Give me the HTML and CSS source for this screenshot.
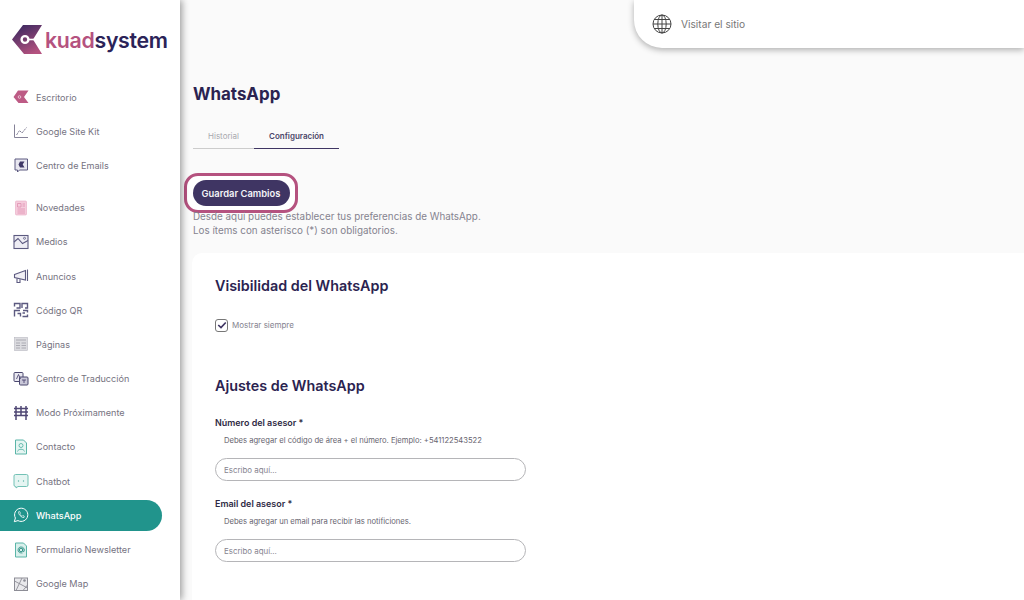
FILE: index.html
```html
<!DOCTYPE html>
<html lang="es">
<head>
<meta charset="utf-8">
<title>WhatsApp</title>
<link rel="stylesheet" href="styles.css">
</head>
<body>
<div class="app">
  <aside class="sidebar">
    <div class="logo">
      <svg class="logo-mark" viewBox="0 0 32 32" width="32" height="32">
        <defs><linearGradient id="lg" x1="0.200" y1="0" x2="0.700" y2="1"><stop offset="0" stop-color="#3a2860"/><stop offset="1" stop-color="#b5527f"/></linearGradient></defs>
        <path d="M11 1H30L21 15.500L30 30H12L0 15.500Z" fill="url(#lg)"/>
        <circle cx="13" cy="15.500" r="3.400" fill="none" stroke="#fff" stroke-width="2.400"/>
        <path d="M16 15.500H23" stroke="#fff" stroke-width="1.600"/>
      </svg>
      <span class="logo-text"><span class="logo-a">kuad</span><span class="logo-b">system</span></span>
    </div>
    <nav class="menu">
      <div class="group">
        <a class="item"><svg class="ico" viewBox="0 0 16 16"><path d="M5 1.500H15.500L11 8L15.500 14H5.500L.5 8Z" fill="#bd5b85"/><circle cx="6.500" cy="8" r="1.300" fill="none" stroke="#f3d5e2" stroke-width=".8"/></svg>Escritorio</a>
        <a class="item"><svg class="ico" viewBox="0 0 16 16" fill="none" stroke="#77748c" stroke-width=".9"><path d="M1.500 1.500V14.500H15"/><path d="M3.500 12L6.500 7.500L9 10L13.500 4.500" stroke-dasharray="2.200 .8"/></svg>Google Site Kit</a>
        <a class="item"><svg class="ico" viewBox="0 0 16 16"><path d="M2 2H14.500V13H6.500L4.500 15V13H2Z" fill="#e8e7f0" stroke="#5c5a80"/><path d="M7 4.500H11.500L9.700 7.500L11.500 10.500H7L5.500 7.500Z" fill="#3f3867"/></svg>Centro de Emails</a>
      </div>
      <div class="group">
        <a class="item"><svg class="ico" viewBox="0 0 16 16"><rect x="2.500" y="1" width="11" height="14" rx="1" fill="#f5ccdc" stroke="#e8a8c2" stroke-width=".6"/><path d="M4.500 3.500H8V7H4.500ZM9.500 4H12M9.500 6H12M4.500 9H12M4.500 11H12M4.500 13H12" fill="none" stroke="#de8fb0" stroke-width=".8"/></svg>Novedades</a>
        <a class="item"><svg class="ico" viewBox="0 0 16 16" fill="none" stroke="#5c5a80" stroke-width="1.100"><rect x="1" y="1.500" width="14" height="13" fill="#eeedf4"/><path d="M1 8L5 4.500L9.500 9.500L15 6.500"/><circle cx="11.500" cy="4.300" r="1" stroke-width=".8"/></svg>Medios</a>
        <a class="item"><svg class="ico" viewBox="0 0 16 16" fill="none" stroke="#5c5a80" stroke-width="1.100"><path d="M1.500 6.500L12.500 2.500V12L1.500 9.500Z" fill="#f0eff5"/><path d="M14.500 1.500V13"/><path d="M4 10.500V14.500H7V11.200"/></svg>Anuncios</a>
        <a class="item"><svg class="ico" viewBox="0 0 16 16" fill="none" stroke="#5c5a80" stroke-width="1.400"><path d="M1.500 4.500V1.500H7V6H3.500M9 6V1.500H14.500V6H12M1.500 14.500V8.500H7M4.500 11.500H7.500V14.500M10 8.500H14.500V10.500M9.500 14.500H14.500V12.500M9.500 11H12"/></svg>Código QR</a>
        <a class="item"><svg class="ico" viewBox="0 0 16 16"><rect x="1.500" y="1.500" width="13" height="13" fill="#dcdce0" stroke="#b8b8c0" stroke-width=".6"/><path d="M3 4H13M3 7H7M3 9.500H7M3 12H7M8.500 7H13M8.500 9.500H13M8.500 12H13" stroke="#a5a5ae" stroke-width=".9"/></svg>Páginas</a>
        <a class="item"><svg class="ico" viewBox="0 0 16 16"><rect x="1" y="1.500" width="9" height="9" rx="1" fill="#e9e8f0" stroke="#4b486f"/><rect x="6.500" y="6" width="8.500" height="8" rx="1" fill="#c9c7d8" stroke="#4b486f"/><path d="M3.500 8L5.500 3.500L7.500 8M9 9H13M11 12V9" fill="none" stroke="#3f3867" stroke-width=".8"/></svg>Centro de Traducción</a>
        <a class="item"><svg class="ico" viewBox="0 0 16 16" fill="none" stroke="#4f4774" stroke-width="1.500"><path d="M3 1V15M8 1V11M13 1V15M1 3.500H15M1 7H15M1 10.500H15" /></svg>Modo Próximamente</a>
        <a class="item"><svg class="ico" viewBox="0 0 16 16" fill="none" stroke="#5bb5a8"><path d="M2.500 1H10.500L13.500 4V15H2.500Z" fill="#e5f5f2"/><circle cx="8" cy="6.500" r="2" stroke-width=".9"/><path d="M4.500 12.500C5 9.500 11 9.500 11.500 12.500" stroke-width=".9"/></svg>Contacto</a>
        <a class="item"><svg class="ico" viewBox="0 0 16 16"><path d="M2.500 1.500H13.500Q15 1.500 15 3V12Q15 13.500 13.500 13.500H5L3 15V13.500H2.500Q1 13.500 1 12V3Q1 1.500 2.500 1.500Z" fill="#e5f5f2" stroke="#72c1b5"/><circle cx="5.500" cy="8" r=".7" fill="#5bb5a8"/><circle cx="10.500" cy="8" r=".7" fill="#5bb5a8"/></svg>Chatbot</a>
        <a class="item active"><svg class="ico" viewBox="0 0 16 16" fill="none" stroke="#fff"><path d="M1.300 14.700L2.400 11A6.600 6.600 0 1 1 5 13.600Z"/><path d="M5.500 4.800C5 7 8.500 11 11 10.500L11.300 9.300L9.800 8.500L9 9.300C8 9 7 8 6.700 7L7.500 6.200L6.700 4.600Z" stroke-width=".7"/></svg>WhatsApp</a>
        <a class="item"><svg class="ico" viewBox="0 0 16 16" fill="none" stroke="#5bb5a8"><path d="M2.500 1H10.500L13.500 4V15H2.500Z" fill="#d9f0ec"/><circle cx="8" cy="8" r="1.800" stroke="#2d8f84"/><path d="M9.800 6.500V9Q10 10 11 9.500Q12 8.500 11 6.500Q9.500 4.500 7 5Q4.500 6 5 9Q6 11.500 9.500 11" stroke="#2d8f84" stroke-width=".8"/></svg>Formulario Newsletter</a>
        <a class="item"><svg class="ico" viewBox="0 0 16 16" fill="none" stroke="#8d8d96"><rect x="1.500" y="2" width="13" height="12.500" fill="#e9e9ec"/><path d="M1.500 5L14.500 12M9 2L3 14.500M10 14.500L14.500 9" stroke-width=".9"/><circle cx="11.500" cy="4.500" r="1.300" fill="#8d8d96" stroke="none"/></svg>Google Map</a>
      </div>
    </nav>
  </aside>
  <main class="main">
    <div class="topbar-row">
      <div class="topbar">
        <svg class="globe" viewBox="0 0 20 20" fill="none" stroke="#444" stroke-width="1"><circle cx="10" cy="10" r="9"/><ellipse cx="10" cy="10" rx="4.200" ry="9"/><path d="M10 1V19M1 10H19M2.200 5.500H17.800M2.200 14.500H17.800"/></svg>
        <span>Visitar el sitio</span>
      </div>
    </div>
    <div class="content">
      <h1 class="title">WhatsApp</h1>
      <div class="tabs">
        <a class="tab">Historial</a>
        <a class="tab tab-on">Configuración</a>
      </div>
      <div class="save-ring"><button class="save" type="button">Guardar Cambios</button></div>
      <p class="intro">Desde aquí puedes establecer tus preferencias de WhatsApp.<br>Los ítems con asterisco (*) son obligatorios.</p>
      <section class="card">
        <h2 class="h2">Visibilidad del WhatsApp</h2>
        <label class="check">
          <span class="box"><svg viewBox="0 0 12 12" width="10" height="10" fill="none" stroke="#3f3563" stroke-width="2"><path d="M1.500 6L4.800 9L10.500 3"/></svg></span>
          Mostrar siempre
        </label>
        <h2 class="h2 h2-second">Ajustes de WhatsApp</h2>
        <div class="field">
          <div class="label">Número del asesor *</div>
          <div class="hint">Debes agregar el código de área + el número. Ejemplo: +541122543522</div>
          <input class="input" type="text" placeholder="Escribo aquí...">
        </div>
        <div class="field">
          <div class="label">Email del asesor *</div>
          <div class="hint">Debes agregar un email para recibir las notificiones.</div>
          <input class="input" type="text" placeholder="Escribo aquí...">
        </div>
      </section>
    </div>
  </main>
</div>
</body>
</html>
```
FILE: styles.css
```css
* { box-sizing: border-box; }
html, body { margin: 0; height: 600px; overflow: hidden; }
body { font-family: "Inter", "Liberation Sans", sans-serif; background: #fafafa; color: #2b2350; }
.app { display: flex; width: 1024px; height: 600px; overflow: hidden; }

.sidebar { flex: 0 0 180px; height: 600px; background: #fff; box-shadow: 2px 0 7px rgba(0,0,0,.38); position: relative; z-index: 2; overflow: hidden; }
.logo { display: flex; align-items: center; height: 32px; margin: 24px 0 0 12px; gap: 1px; }
.logo-mark { flex: none; }
.logo-text { font-size: 21.300px; font-weight: 600; letter-spacing: -.3px; line-height: 32px; }
.logo-a { color: #b5527f; }
.logo-b { color: #2b2358; }
.menu { margin-top: 24px; }
.group { margin-bottom: 8px; }
.item { display: flex; align-items: center; height: 34.200px; padding-left: 13px; gap: 7px; font-size: 9.100px; color: #76737f; width: 162px; }
.ico { width: 16px; height: 16px; flex: none; }
.active { height: 31px; margin: 1.600px 0; background: #21948c; color: #fff; border-radius: 0 16px 16px 0; font-weight: 500; }

.main { flex: 1; min-width: 0; }
.topbar-row { display: flex; justify-content: flex-end; }
.topbar { width: 390px; height: 48px; background: #fff; border-bottom-left-radius: 28px; box-shadow: 0 2px 6px rgba(0,0,0,.3); display: flex; align-items: center; gap: 9px; padding: 0 0 1px 18px; font-size: 10.200px; color: #777; }
.globe { width: 20px; height: 20px; flex: none; }
.content { padding: 0 0 0 12px; }
.title { margin: 36px 0 0 1px; font-size: 16.900px; line-height: 20px; font-weight: 700; color: #2b2350; }
.tabs { display: flex; margin: 20px 0 0 1px; }
.tab { height: 25px; font-size: 8px; line-height: 24px; text-align: center; color: #a8a8ae; border-bottom: 1px solid #ccc; width: 61px; }
.tab-on { width: 85px; color: #4a4668; font-weight: 600; border-bottom: 1px solid #3f3563; }
.save-ring { margin: 24px 0 0 -8px; width: 114px; height: 40px; border: 3px solid #b5527f; border-radius: 14px; background: #fff; display: flex; align-items: center; justify-content: center; }
.save { width: 97px; height: 26px; border: 0; border-radius: 13px; background: #3f3563; color: #f4f3f7; font: 600 9.400px "Inter", sans-serif; padding: 0; }
.intro { margin: -4px 0 0 1px; font-size: 9.850px; line-height: 14px; color: #85838f; }
.card { margin-top: 16px; background: #fff; border-top-left-radius: 10px; height: 360px; padding: 23px 0 0 23px; }
.h2 { margin: 0; font-size: 14.350px; line-height: 20px; font-weight: 600; color: #2b2350; }
.h2-second { margin-top: 44px; }
.check { display: flex; align-items: center; gap: 4px; margin-top: 22px; font-size: 8px; color: #85838f; height: 14px; }
.box { width: 13px; height: 13px; border: 1px solid #777; border-radius: 3px; display: flex; align-items: center; justify-content: center; }
.field { margin-top: 21px; }
.field + .field { margin-top: 17px; }
.label { font-size: 8.950px; font-weight: 600; line-height: 12px; color: #2f2b45; }
.hint { font-size: 7.620px; line-height: 12px; margin: 6px 0 0 9px; color: #67646f; }
.input { display: block; width: 311px; height: 23px; margin-top: 11px; border: 1px solid #b5b5b8; border-radius: 12px; padding: 0 8px; background: #fff; font: 7.900px "Inter", sans-serif; outline: 0; }
.input::placeholder { color: #85838f; opacity: 1; }
```
